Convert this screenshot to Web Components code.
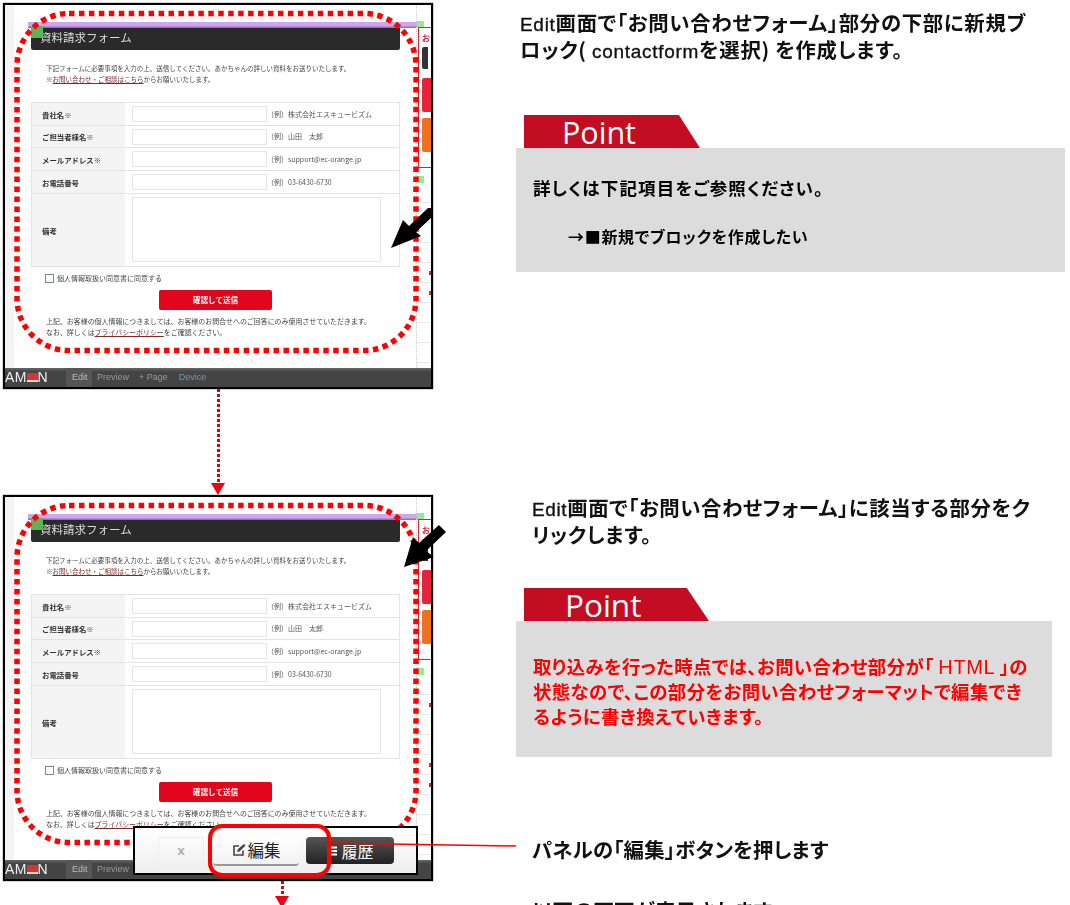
<!DOCTYPE html>
<html lang="ja"><head><meta charset="utf-8"><title>Edit</title>
<style>
html,body{margin:0;padding:0;background:#fff;overflow:hidden}
body{font-family:"Noto Sans CJK JP","Liberation Sans",sans-serif;color:#000}
form-shot>svg{position:absolute;left:0;top:0;overflow:visible;pointer-events:none}
form-shot>svg.top{z-index:3}
form-shot>.ring{position:absolute;left:205px;top:329px;width:123px;height:53px;border:4px solid #f00;border-radius:14px;box-sizing:border-box;z-index:3}
guide-head .lat{font:400 19px "Liberation Sans",sans-serif;-webkit-text-stroke:.35px #111}
</style></head><body>
<guide-page>
  <guide-step style="height:492px">
    <form-shot slot="shot">
      <svg slot="overlay" width="450" height="390" viewBox="0 0 450 390"><rect x="14" y="10.5" width="399" height="337" rx="52" fill="none" stroke="#f00" stroke-width="5.5" stroke-dasharray="5.5 4.45"/><polygon points="388,245 400,217 406,223 425,205 429,205 429,214 413,229 418,233" fill="#000"/></svg>
    </form-shot>
    <flow-arrow slot="flow" style="--x:208px;height:106px"></flow-arrow>
    <guide-head><span class="lat">Edit</span>画面で「お問い合わせフォーム」部分の下部に新規ブ<br>ロック( <span class="lat">contactform</span>を選択) を作成します。</guide-head>
    <point-note style="--gap:52px;--tab:176px;--w:549px;--h:124px;--pl:38px;--fs:30.5px">
      <p class="a">詳しくは下記項目をご参照ください。</p>
      <p class="b">→■新規でブロックを作成したい</p>
    </point-note>
  </guide-step>
  <guide-step style="height:410px">
    <form-shot slot="shot">
      <svg slot="overlay" width="450" height="390" viewBox="0 0 450 390"><rect x="14" y="10.5" width="399" height="337" rx="52" fill="none" stroke="#f00" stroke-width="5.5" stroke-dasharray="5.5 4.45"/><polygon points="401,72 410,42 416,48 436,30 443,37 423,56 431,62" fill="#000"/></svg>
      <edit-panel slot="overlay"></edit-panel>
      <div slot="overlay" class="ring"></div>
      <svg slot="overlay" class="top" width="520" height="390" viewBox="0 0 520 390"><line x1="326" y1="348" x2="513" y2="351" stroke="#f00" stroke-width="1.5"/></svg>
    </form-shot>
    <flow-arrow slot="flow" style="--x:272px;height:27px"></flow-arrow>
    <guide-head style="--mt:-1px;--ml:99px;--ls:.6px"><span class="lat">Edit</span>画面で「お問い合わせフォーム」に該当する部分をク<br>リックします。</guide-head>
    <point-note style="--gap:40px;--tab:185px;--w:536px;--h:136px;--pl:41px;--fs:31.5px">
      <p class="r">取り込みを行った時点では、お問い合わせ部分が「 <span style="font:400 20px 'Liberation Sans',sans-serif;letter-spacing:.6px">HTML</span> 」の<br>状態なので、この部分をお問い合わせフォーマットで編集でき<br>るように書き換えていきます。</p>
    </point-note>
    <guide-head style="--mt:79px;--ml:99px;--ls:.2px">パネルの「編集」ボタンを押します</guide-head>
    <guide-head style="--mt:34px;--ml:99px;--ls:.2px">以下の画面が表示されます</guide-head>
  </guide-step>
</guide-page>
<script>
function def(name, html){
  const t=document.createElement('template'); t.innerHTML=html;
  customElements.define(name, class extends HTMLElement{
    constructor(){super();this.attachShadow({mode:'open'}).appendChild(t.content.cloneNode(true));}
  });
}
def('guide-page',`<style>:host{display:block;width:1070px;height:905px;overflow:hidden;padding:3px 0 0 3px;box-sizing:border-box}</style><slot></slot>`);
def('guide-step',`<style>
:host{display:grid;grid-template-columns:430px 1fr;position:relative}
.l{display:flex;flex-direction:column;min-width:0}
.r{display:flex;flex-direction:column;min-width:0}
</style><div class="l"><slot name="shot"></slot><slot name="flow"></slot></div><div class="r"><slot></slot></div>`);
def('guide-head',`<style>
:host{display:block;margin:var(--mt,6px) 0 0 var(--ml,87px);font:700 20.4px/27px "Noto Sans CJK JP",sans-serif;font-feature-settings:"palt";letter-spacing:var(--ls,.7px);white-space:nowrap;color:#111;filter:blur(.3px)}
</style><slot></slot>`);
def('point-note',`<style>
:host{display:block;margin:var(--gap) 0 0 83px}
.tab{width:var(--tab);height:33px;margin-left:8px;background:#c30d23;clip-path:polygon(0 0,88% 0,100% 100%,0 100%);color:#fff;font:400 var(--fs)/34px "Open Sans",sans-serif;padding-left:var(--pl);box-sizing:border-box}
.box{width:var(--w);height:var(--h);background:#dcdcdc;box-sizing:border-box;padding:28px 17px;filter:blur(.25px)}
::slotted(p){margin:0;white-space:nowrap;font-weight:700;font-feature-settings:"palt"}
::slotted(p.a){font-size:17.5px;line-height:24px;letter-spacing:1.15px}
::slotted(p.b){font-size:16px;line-height:24px;letter-spacing:.7px;margin:24px 0 0 35px}
::slotted(p.r){font-size:18.4px;line-height:24.5px;letter-spacing:.4px;color:#f00;margin-top:5px}
</style><div class="tab">Point</div><div class="box"><slot></slot></div>`);
def('flow-arrow',`<style>
:host{display:flex;flex-direction:column;align-items:center;width:14px;margin-left:var(--x)}
.l{flex:1;width:3px;background:repeating-linear-gradient(#e00010 0 3px,transparent 3px 5px)}
.t{width:14px;height:12px;background:#f00010;clip-path:polygon(0 0,100% 0,50% 100%);flex:none}
</style><div class="l"></div><div class="t"></div>`);
def('form-row',`<style>
:host{display:grid;grid-template-columns:93px 1fr;border-top:1px solid #e4e4e4;height:var(--rh,23px);box-sizing:border-box;font-size:7px;color:#333}
.k{background:#f4f4f4;display:flex;align-items:center;padding-left:10px;font-weight:700;font-size:7.4px}
.v{display:flex;align-items:center;padding-left:7px;color:#555}
.i{width:135px;height:16px;border:1px solid #e6e6e6;box-sizing:border-box;flex:none}
:host([tall]) .i{width:249px;height:65px;margin-top:-1px}
</style><div class="k"><slot name="label"></slot></div><div class="v"><span class="i"></span><slot></slot></div>`);
def('side-rail',`<style>
:host{display:block;width:15px;height:100%;border-left:1px dotted #d9cda0;overflow:hidden;position:relative;box-sizing:border-box}
.g{width:7px;height:7px;background:#8fef8f}
.b{margin-top:-1px;margin-left:1px;border:1px solid #d8242e;border-right:0;height:141px;padding:5px 0 0 3px;box-sizing:border-box}
.t{color:#d8242e;font:700 8px/10px "Noto Sans CJK JP",sans-serif}
.p{width:6px;height:22px;margin-top:4px;background:#333;border-radius:2px 0 0 2px}
.c{height:34px;margin-top:9px;background:#e5233a;border-radius:2px 0 0 2px}
.o{height:34px;margin-top:6px;background:#f07020;border-radius:2px 0 0 2px}
.row{height:19px;border-bottom:1px solid #e8e8e8;position:relative}
.row i{position:absolute;left:12px;top:8px;width:3px;height:4px;background:#c33}
</style><div style="height:16px"></div><div class="g"></div><div class="b"><div class="t">お</div><div class="p"></div><div class="c"></div><div class="o"></div></div><div style="height:8px"></div><div class="g"></div><div class="row"></div><div class="row"><i></i></div><div class="row"></div><div class="row"></div><div class="row"><i></i></div><div class="row"><i></i></div><div class="row"></div><div class="row"></div><div class="row"></div>`);
def('edit-panel',`<style>
:host{display:block;position:absolute;left:130px;top:331px;width:285px;height:49px;border:2px solid #000;box-sizing:border-box;background:linear-gradient(#fff,#eee);z-index:2}
.f{display:flex;height:100%;align-items:center;padding-left:23px;box-sizing:border-box;font-family:"Noto Sans CJK JP",sans-serif}
.x{width:44px;height:26px;border:1px solid #eee;text-align:center;font:700 13px/26px "Liberation Sans",sans-serif;color:#aaa}
.e{width:86px;height:30px;margin-left:9px;border-bottom:2px solid #999;border-radius:4px;display:flex;align-items:center;justify-content:center;gap:2px;font-size:16.5px;color:#222;background:linear-gradient(#fff,#f2f2f2);box-sizing:border-box}
.h{width:88px;height:27px;margin-left:7px;border-radius:4px;background:linear-gradient(#555,#222);color:#fff;display:flex;align-items:center;justify-content:center;gap:3px;font-size:16px}
</style><div class="f"><div class="x">x</div><div class="e"><svg width="14" height="14" viewBox="0 0 14 14"><path d="M11 7.5V12H2V3h5" fill="none" stroke="#444" stroke-width="1.6"/><path d="M5 9l1-3 6-5 1.5 1.5-6 6z" fill="#444"/></svg>編集</div><div class="h"><svg width="12" height="12" viewBox="0 0 12 12"><path d="M1 2.5h10M1 6h10M1 9.5h10" stroke="#fff" stroke-width="1.8"/></svg>履歴</div></div>`);
def('form-shot',`<style>
:host{display:block;position:relative;width:430px;height:386px;flex:none}
.frame{width:100%;height:100%;border:2px solid #000;box-sizing:border-box;background:#fff;display:flex;flex-direction:column;overflow:hidden;box-shadow:0 0 1px #000}
.top{flex:1;display:flex;min-height:0;filter:blur(.4px)}
.strip{width:9px;background:#f4f4f4;flex:none}
.main{width:402px;flex:none;padding-top:17px;box-sizing:border-box;font:400 7px/11px "Noto Sans CJK JP",sans-serif;color:#444;position:relative}
.purple{height:6px;margin:0 -4px 0 14px;background:linear-gradient(#cda6ee 60%,#8a5cb8)}
.head{height:22px;margin:0 16px 0 17px;background:#2a2a2a;border-radius:0 0 2px 2px;color:#ddd;font-size:11.5px;line-height:18px;padding-left:9px;box-sizing:border-box}
.green{position:absolute;left:17px;top:21px;width:12px;height:12px;background:#5cb35c}
.intro{margin:13px 0 0 32px;white-space:nowrap;font-size:6.5px}
.intro u{color:#7a2a2a}
.tbl{margin:17px 16px 0 17px;border:1px solid #e4e4e4;border-top:0;white-space:nowrap}
.chk{margin:4px 0 0 31px;display:flex;align-items:center;gap:3px;height:14px}
.chk i{width:7px;height:7px;border:1px solid #789;display:block}
.btn{width:113px;height:20px;margin:5px 0 0 145px;background:#e2061c;border-radius:2px;color:#fff;font-weight:700;font-size:7.6px;text-align:center;line-height:20px}
.foot{margin:6px 0 0 32px;white-space:nowrap;font-size:6.95px}
.foot u{color:#7a2a2a}
.bar{height:19px;background:linear-gradient(#666,#444 20%);display:flex;align-items:center;font:400 9px/19px "Liberation Sans",sans-serif;color:#999;flex:none;filter:blur(.35px);overflow:hidden}
.logo{width:61px;color:#eee;font-size:14px;display:flex;align-items:center;white-space:nowrap;letter-spacing:.3px}
.logo b{display:block;width:11px;height:9px;background:#e03030;border-bottom:2px solid #ddd;box-sizing:border-box}
.edit{background:#555;width:26px;padding-left:6px;box-sizing:border-box;color:#bbb}
.s{margin-left:5px}
</style>
<div class="frame"><div class="top"><div class="strip"></div><div class="main">
<div class="purple"></div><div class="head">資料請求フォーム</div><div class="green"></div>
<div class="intro">下記フォームに必要事項を入力の上、送信してください。あかちゃんの詳しい資料をお送りいたします。<br>※<u>お問い合わせ・ご相談はこちら</u>からお願いいたします。</div>
<div class="tbl">
<form-row><span slot="label">貴社名※</span>（例）株式会社エスキュービズム</form-row>
<form-row style="--rh:22px"><span slot="label">ご担当者様名※</span>（例）山田　太郎</form-row>
<form-row><span slot="label">メールアドレス※</span>（例）support@ec-orange.jp</form-row>
<form-row><span slot="label">お電話番号</span>（例）03-6430-6730</form-row>
<form-row tall style="--rh:73px"><span slot="label">備考</span></form-row>
</div>
<div class="chk"><i></i>個人情報取扱い同意書に同意する</div>
<div class="btn">確認して送信</div>
<div class="foot">上記、お客様の個人情報につきましては、お客様のお問合せへのご回答にのみ使用させていただきます。<br>なお、詳しくは<u>プライバシーポリシー</u>をご確認ください。</div>
</div><side-rail></side-rail></div>
<div class="bar"><div class="logo">AM<b></b>N</div><div class="edit">Edit</div><div class="s">Preview</div><div class="s" style="margin-left:10px">+ Page</div><div class="s" style="margin-left:11px;color:#6a9ab8">Device</div></div>
</div><div class="ov"><slot name="overlay"></slot></div>`);
</script>
</body></html>
